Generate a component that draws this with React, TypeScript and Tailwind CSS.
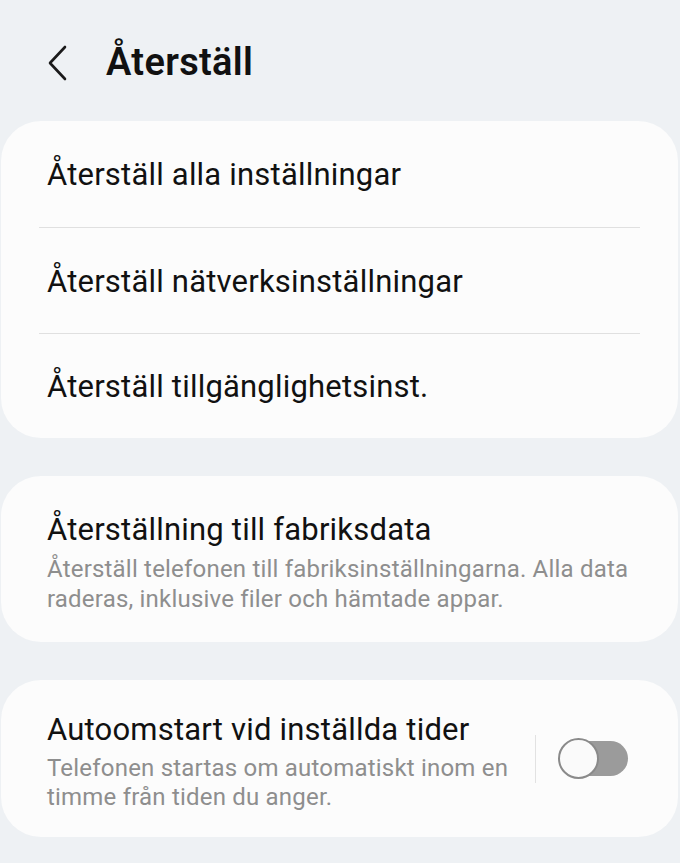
import React from "react";

const font = { fontFamily: "Roboto, 'Noto Sans', sans-serif" };

const Row: React.FC<{ label: string; height: string; last?: boolean }> = ({ label, height, last }) => (
  <div className="flex flex-col">
    <div className={`${height} flex items-center px-[46px] pt-[3px]`}>
      <span className="text-[31px] text-[#111111] tracking-[0.2px]">{label}</span>
    </div>
    {!last && <div className="mx-[38px] h-px bg-[#e0e0e0]" />}
  </div>
);

const Toggle: React.FC = () => (
  <div className="relative w-[70px] h-[42px] flex items-center">
    <div className="absolute right-0 w-[56px] h-[35px] rounded-full bg-[#9b9b9b]" />
    <div className="absolute left-0 w-[41px] h-[41px] rounded-full bg-[#fafafa] border-2 border-[#8a8a8a]" />
  </div>
);

export default function App() {
  return (
    <div className="w-[680px] h-[863px] bg-[#eef1f4] overflow-hidden" style={font}>
      {/* Header */}
      <div className="h-[121px] flex items-center pl-[46px] pt-[4px]">
        <svg width="24" height="36" viewBox="0 0 24 36" className="mr-[36px]">
          <path d="M19 2 L4 18 L19 34" fill="none" stroke="#1a1a1a" strokeWidth="2.6" strokeLinecap="round" strokeLinejoin="round" />
        </svg>
        <h1 className="text-[38px] font-semibold text-[#111111] tracking-[0.3px]">Återställ</h1>
      </div>

      {/* Reset options */}
      <div className="ml-px mr-[2px] bg-[#fcfcfc] rounded-[40px]">
        <Row label="Återställ alla inställningar" height="h-[106px]" />
        <Row label="Återställ nätverksinställningar" height="h-[105px]" />
        <Row label="Återställ tillgänglighetsinst." height="h-[104px]" last />
      </div>

      {/* Factory reset */}
      <div className="mt-[38px] ml-px mr-[2px] bg-[#fcfcfc] rounded-[40px] h-[166px] flex flex-col justify-center px-[46px] pt-[6px]">
        <div className="text-[31px] text-[#111111] leading-[40px] tracking-[0.2px]">Återställning till fabriksdata</div>
        <div className="text-[24px] text-[#8e8e8e] leading-[30px] tracking-[0.2px] mt-[4px]">
          Återställ telefonen till fabriksinställningarna. Alla data raderas, inklusive filer och hämtade appar.
        </div>
      </div>

      {/* Auto restart */}
      <div className="mt-[38px] ml-px mr-[2px] bg-[#fcfcfc] rounded-[40px] h-[157px] flex items-center pl-[46px] pr-[50px]">
        <div className="flex-1 flex flex-col pt-[4px]">
          <div className="text-[31px] text-[#111111] leading-[40px] tracking-[0.2px]">Autoomstart vid inställda tider</div>
          <div className="text-[24px] text-[#8e8e8e] leading-[29px] tracking-[0.2px] pr-[10px] mt-[4px]">
            Telefonen startas om automatiskt inom en timme från tiden du anger.
          </div>
        </div>
        <div className="w-[1.5px] h-[48px] bg-[#e2e2e2] mr-[22px]" />
        <Toggle />
      </div>
    </div>
  );
}
